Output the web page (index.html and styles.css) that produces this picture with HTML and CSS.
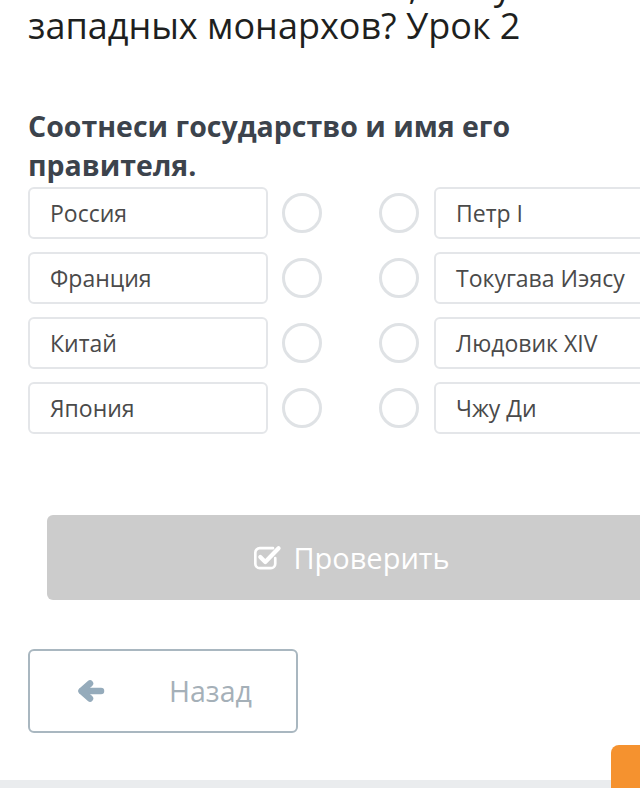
FILE: index.html
```html
<!DOCTYPE html>
<html lang="ru">
<head>
<meta charset="utf-8">
<title>Урок 2</title>
<link rel="stylesheet" href="styles.css">
</head>
<body>
<main class="page">
  <h1 class="title">такой же абсолютной, как у<br>западных монархов? Урок 2</h1>
  <h2 class="task">Соотнеси государство и имя его правителя.</h2>
  <div class="match">
    <div class="row">
      <div class="item">Россия</div>
      <span class="dot dot-left"></span>
      <span class="dot dot-right"></span>
      <div class="item item-right">Петр I</div>
    </div>
    <div class="row">
      <div class="item">Франция</div>
      <span class="dot dot-left"></span>
      <span class="dot dot-right"></span>
      <div class="item item-right">Токугава Иэясу</div>
    </div>
    <div class="row">
      <div class="item">Китай</div>
      <span class="dot dot-left"></span>
      <span class="dot dot-right"></span>
      <div class="item item-right">Людовик XIV</div>
    </div>
    <div class="row">
      <div class="item">Япония</div>
      <span class="dot dot-left"></span>
      <span class="dot dot-right"></span>
      <div class="item item-right">Чжу Ди</div>
    </div>
  </div>
  <button class="check" type="button">
    <svg class="check-icon" width="31" height="29" viewBox="0 0 28 26" aria-hidden="true">
      <path d="M19 5.5H7a4 4 0 0 0-4 4v10a4 4 0 0 0 4 4h10a4 4 0 0 0 4-4v-5" fill="none" stroke="#fff" stroke-width="2.4" stroke-linecap="round"/>
      <path d="M7.5 13.5l4.5 4.5L24 5.5" fill="none" stroke="#fff" stroke-width="3.8" stroke-linecap="round" stroke-linejoin="round"/>
    </svg>
    <span>Проверить</span>
  </button>
  <button class="back" type="button">
    <svg class="back-icon" width="28" height="22" viewBox="0 0 28 22" aria-hidden="true">
      <path d="M5 11H24" stroke="#95abbb" stroke-width="6.5" stroke-linecap="round"/>
      <path d="M13 3.5L4.5 11L13 18.5" fill="none" stroke="#95abbb" stroke-width="6.5" stroke-linecap="round" stroke-linejoin="round"/>
    </svg>
    <span>Назад</span>
  </button>
</main>
<footer class="band"></footer>
<div class="fab"></div>
</body>
</html>
```
FILE: styles.css
```css
html, body {
  margin: 0;
  padding: 0;
  overflow: hidden;
  background: #ffffff;
}

body {
  font-family: "Open Sans", "Noto Sans", sans-serif;
  width: 640px;
  height: 788px;
}

.page {
  width: 700px;
  padding-left: 28px;
  box-sizing: border-box;
}

.title {
  margin: -34px 0 0;
  font-size: 36px;
  line-height: 40px;
  font-weight: 400;
  color: #1e1f20;
  white-space: nowrap;
}

.task {
  margin: 61px 0 0;
  width: 560px;
  font-size: 28.5px;
  line-height: 39px;
  font-weight: 700;
  color: #3c434c;
}

.match {
  margin-top: 2px;
  display: flex;
  flex-direction: column;
  gap: 13px;
}

.row {
  display: flex;
  align-items: center;
  height: 52px;
}

.item {
  width: 240px;
  height: 52px;
  box-sizing: border-box;
  border: 2px solid #e4e6e9;
  border-radius: 6px;
  padding-left: 20px;
  display: flex;
  align-items: center;
  font-size: 23px;
  color: #4a4a4a;
  flex-shrink: 0;
  background: #fff;
}

.dot {
  width: 40px;
  height: 40px;
  box-sizing: border-box;
  border: 3px solid #dfe2e5;
  border-radius: 50%;
  flex-shrink: 0;
}

.dot-left { margin-left: 14px; }
.dot-right { margin-left: 57px; }
.item-right { margin-left: 15px; }

.check {
  margin: 81px 0 0 19px;
  width: 608px;
  height: 85px;
  border: none;
  border-radius: 6px;
  background: #cccccc;
  display: flex;
  align-items: center;
  justify-content: center;
  gap: 10px;
  font-family: inherit;
  font-size: 29px;
  color: #ffffff;
  padding: 0;
}

.check-icon { margin-top: -3px; }

.back {
  margin-top: 49px;
  width: 270px;
  height: 84px;
  box-sizing: border-box;
  border: 2px solid #a9b7c0;
  border-radius: 6px;
  background: #ffffff;
  display: flex;
  align-items: center;
  padding: 0 0 0 47px;
  gap: 64px;
  font-family: inherit;
  font-size: 28.5px;
  color: #a5b0b8;
}

.band {
  margin-top: 47px;
  height: 20px;
  background: #eaecee;
}

.fab {
  position: fixed;
  left: 611px;
  top: 745px;
  width: 60px;
  height: 60px;
  border-radius: 8px 0 0 0;
  background: #f5922f;
}
```
